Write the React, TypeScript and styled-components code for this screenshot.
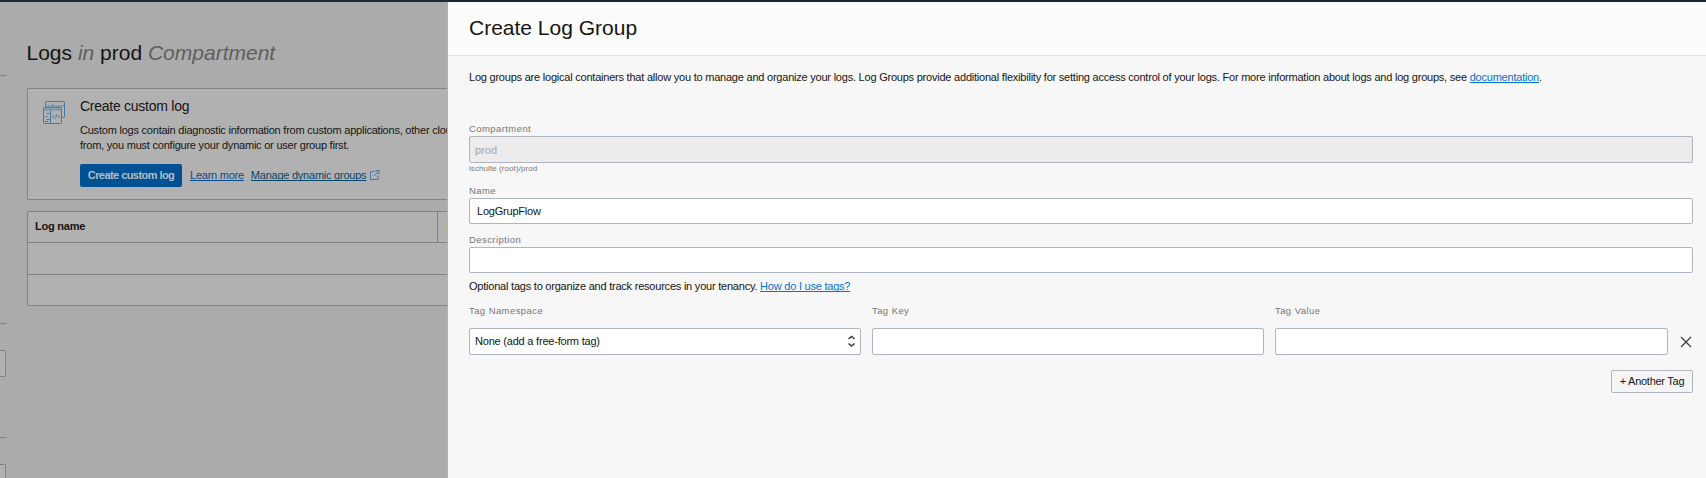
import React from "react";
import styled, { createGlobalStyle } from "styled-components";

const GlobalStyle = createGlobalStyle`
  * { box-sizing: border-box; }
  html, body { margin: 0; padding: 0; overflow: hidden; }
  body {
    font-family: "Liberation Sans", Arial, sans-serif;
    font-size: 11px;
    letter-spacing: -0.22px;
    color: #161513;
    background: #ababab;
  }
`;

const Page = styled.div`
  display: flex;
  flex-direction: column;
  width: 1706px;
  height: 478px;
  overflow: hidden;
`;

const TopBar = styled.div`
  flex: none;
  height: 2px;
  background: #1f2735;
`;

const Columns = styled.div`
  display: flex;
  flex: 1;
  min-height: 0;
`;

const Backdrop = styled.div`
  display: flex;
  flex: none;
  width: 448px;
  border-right: 1px solid #b1b1b1;
  overflow: hidden;
  background: #ababab;
`;

const Sidebar = styled.div`
  flex: none;
  width: 6px;
  padding-top: 73px;
`;

const SideRule = styled.div<{ $gap: number }>`
  height: 1px;
  background: #7f8386;
  margin-bottom: ${(p) => p.$gap}px;
`;

const SideField = styled.div<{ $gap: number }>`
  height: 27px;
  border: 1px solid #7f8386;
  border-left: 0;
  border-radius: 0 2px 2px 0;
  background: #b1b1b1;
  margin-bottom: ${(p) => p.$gap}px;
`;

const Main = styled.div`
  flex: none;
  width: 441px;
  padding: 37px 0 0 21px;
  overflow: hidden;
`;

const PageTitle = styled.h1<{ $shift?: number }>`
  margin: 0 0 0 ${(p) => p.$shift ?? 0}px;
  font-size: 21px;
  font-weight: 400;
  line-height: 28px;
  white-space: nowrap;
  letter-spacing: 0;
  em { color: #5e5e5e; }
`;

const Card = styled.section`
  display: flex;
  width: 500px;
  height: 112px;
  margin-top: 21px;
  padding: 12px 0 0 15px;
  border: 1px solid #7f8386;
  border-radius: 2px;
  background: #b1b1b1;
`;

const CardIcon = styled.svg`
  flex: none;
  width: 23px;
  height: 24px;
  margin-right: 14px;
`;

const CardBody = styled.div`
  white-space: nowrap;
`;

const CardTitle = styled.h2`
  margin: -3px 0 0;
  font-size: 14px;
  font-weight: 400;
  line-height: 16px;
  letter-spacing: -0.26px;
`;

const CardText = styled.p`
  margin: 9px 0 0;
  line-height: 15px;
`;

const Actions = styled.div`
  display: flex;
  align-items: center;
  margin-top: 11px;
  height: 23px;
`;

const PrimaryButton = styled.button`
  width: 102px;
  height: 23px;
  margin: 0 8px 0 0;
  padding: 0;
  border: 0;
  border-radius: 2px;
  background: #005294;
  color: #b5bcc2;
  font: bold 11px/21px "Liberation Sans", Arial, sans-serif;
  letter-spacing: -0.56px;
  white-space: nowrap;
`;

const Link = styled.a<{ $tone?: string; $gap?: number }>`
  color: ${(p) => p.$tone ?? "#0572ce"};
  margin-right: ${(p) => p.$gap ?? 0}px;
  text-decoration: underline;
  text-underline-offset: 1px;
  text-decoration-thickness: 1px;
  text-decoration-skip-ink: none;
`;

const ActionLink = styled(Link)`
  height: 15px;
  line-height: 15px;
  letter-spacing: -0.24px;
`;

const ExternalIcon = styled.svg`
  width: 10px;
  height: 10px;
  margin-bottom: 1px;
`;

const Table = styled.div`
  width: 500px;
  margin-top: 11px;
  border: 1px solid #7f8386;
  border-radius: 2px;
  background: #b1b1b1;
`;

const TableHead = styled.div`
  display: flex;
  height: 31px;
  border-bottom: 1px solid #7f8386;
`;

const HeadCell = styled.div`
  flex: none;
  width: 410px;
  padding-left: 7px;
  border-right: 1px solid #7f8386;
  font-weight: bold;
  line-height: 29px;
`;

const Marker = styled.div`
  flex: none;
  width: 8px;
  height: 9px;
  margin: 10px 0 0 8px;
  border-radius: 3px;
  background: #b6b38d;
`;

const TableRow = styled.div`
  height: 31px;
  & + & { border-top: 1px solid #7f8386; }
`;

const Panel = styled.main`
  display: flex;
  flex-direction: column;
  flex: 1;
  background: #f7f7f7;
`;

const PanelHeader = styled.header`
  height: 54px;
  padding: 12px 21px 0;
  border-bottom: 1px solid #e4e4e4;
  background: #fcfcfc;
`;

const PanelBody = styled.div`
  padding: 14px 13px 0 21px;
`;

const Text = styled.p<{ $top?: number }>`
  margin: ${(p) => p.$top ?? 0}px 0 0;
  line-height: 14px;
  white-space: nowrap;
`;

const Label = styled.label<{ $top: number; $gap: number }>`
  display: block;
  margin: ${(p) => p.$top}px 0 ${(p) => p.$gap}px;
  color: #767676;
  font-size: 9.5px;
  line-height: 12px;
  letter-spacing: 0.42px;
`;

const Field = styled.div<{ $height: number; $disabled?: boolean; $indent?: number }>`
  display: flex;
  align-items: center;
  justify-content: space-between;
  height: ${(p) => p.$height}px;
  padding: 0 5px 1px ${(p) => p.$indent ?? 5}px;
  border: 1px solid #aeb5bf;
  border-radius: 2px;
  background: ${(p) => (p.$disabled ? "#ececec" : "#ffffff")};
  color: ${(p) => (p.$disabled ? "#a5a5a5" : "#161513")};
  letter-spacing: ${(p) => (p.$disabled ? 0 : -0.21)}px;
`;

const DisabledText = styled.span`
  padding-top: 2px;
`;

const Hint = styled.div`
  height: 11px;
  font-size: 8px;
  line-height: 11px;
  letter-spacing: 0.08px;
  color: #7a7a7a;
`;

const TagRow = styled.div`
  display: grid;
  grid-template-columns: 392px 392px 393px 14px;
  column-gap: 11px;
`;

const RemoveIcon = styled.svg`
  width: 12px;
  height: 12px;
  align-self: end;
  margin: 0 0 7px 0.5px;
`;

const Footer = styled.div`
  display: flex;
  justify-content: flex-end;
  margin-top: 15px;
`;

const AddButton = styled.button`
  width: 82px;
  height: 23px;
  padding: 0;
  border: 1px solid #aeb5bf;
  border-radius: 2px;
  background: #f5f5f5;
  color: #161513;
  font: 11px/21px "Liberation Sans", Arial, sans-serif;
  letter-spacing: -0.27px;
  white-space: nowrap;
`;

export default function App() {
  return (
    <Page>
      <GlobalStyle />
      <TopBar />
      <Columns>
        <Backdrop>
          <Sidebar>
            <SideRule $gap={247} />
            <SideRule $gap={26} />
            <SideField $gap={60} />
            <SideRule $gap={26} />
            <SideField $gap={0} />
          </Sidebar>
          <Main>
            <PageTitle $shift={-0.5}>
              Logs <em>in</em> prod <em>Compartment</em>
            </PageTitle>
            <Card>
              <CardIcon viewBox="0 0 23 24" fill="none" stroke="#3f7cad">
                <path d="M2.5 6V1.5a1 1 0 0 1 1-1h17a1 1 0 0 1 1 1V15.500a1 1 0 0 1-1 1H19" />
                <path d="M3 5h18M9.500 3v2" stroke="#5689b0" />
                <rect x="0.5" y="6.5" width="18" height="16" rx="1" />
                <path d="M1 8.500h17" strokeWidth="2" stroke="#7094b0" />
                <path d="M7.500 9.500v13M3.500 12.500h3M2 15.500h2.500M3.500 18.500h3M2 20.500h3" />
                <path d="M11 13.800l-1.800 1.700 1.800 1.700M15 13.800l1.800 1.700-1.800 1.700M13.700 13.300l-1.200 4.400" />
              </CardIcon>
              <CardBody>
                <CardTitle>Create custom log</CardTitle>
                <CardText>
                  Custom logs contain diagnostic information from custom applications, other cloud
                  <br />
                  from, you must configure your dynamic or user group first.
                </CardText>
                <Actions>
                  <PrimaryButton>Create custom log</PrimaryButton>
                  <ActionLink $tone="#0b4b8c" $gap={7}>Learn more</ActionLink>
                  <ActionLink $tone="#07486a" $gap={4}>Manage dynamic groups</ActionLink>
                  <ExternalIcon viewBox="0 0 10 10" fill="none" stroke="#3f7cad">
                    <path d="M4.500 1.500h-4v8h7.500v-4M5.500 0.500h3.500v4M9 0.500L4 6" />
                  </ExternalIcon>
                </Actions>
              </CardBody>
            </Card>
            <Table>
              <TableHead>
                <HeadCell>Log name</HeadCell>
                <Marker />
              </TableHead>
              <TableRow />
              <TableRow />
            </Table>
          </Main>
        </Backdrop>
        <Panel>
          <PanelHeader>
            <PageTitle>Create Log Group</PageTitle>
          </PanelHeader>
          <PanelBody>
            <Text>
              Log groups are logical containers that allow you to manage and organize your logs. Log Groups provide
              additional flexibility for setting access control of your logs. For more information about logs and log
              groups, see <Link>documentation</Link>.
            </Text>
            <Label $top={39} $gap={1}>Compartment</Label>
            <Field $height={27} $disabled>
              <DisabledText>prod</DisabledText>
            </Field>
            <Hint>lschulte (root)/prod</Hint>
            <Label $top={11} $gap={1}>Name</Label>
            <Field $height={26} $indent={7}>LogGrupFlow</Field>
            <Label $top={10} $gap={1}>Description</Label>
            <Field $height={26} />
            <Text $top={6}>
              Optional tags to organize and track resources in your tenancy. <Link>How do I use tags?</Link>
            </Text>
            <TagRow>
              <div>
                <Label $top={12} $gap={11}>Tag Namespace</Label>
                <Field $height={27}>
                  None (add a free-form tag)
                  <svg width="7" height="12" viewBox="0 0 7 12" fill="none" stroke="#3a3a3a" strokeWidth="1.500">
                    <path d="M0.500 4l3-2.500 3 2.500M0.500 8.500l3 2.500 3-2.500" />
                  </svg>
                </Field>
              </div>
              <div>
                <Label $top={12} $gap={11}>Tag Key</Label>
                <Field $height={27} />
              </div>
              <div>
                <Label $top={12} $gap={11}>Tag Value</Label>
                <Field $height={27} />
              </div>
              <RemoveIcon viewBox="0 0 12 12" stroke="#3a3a3a" strokeWidth="1.200">
                <path d="M1 1l10 10M11 1L1 11" />
              </RemoveIcon>
            </TagRow>
            <Footer>
              <AddButton>+ Another Tag</AddButton>
            </Footer>
          </PanelBody>
        </Panel>
      </Columns>
    </Page>
  );
}
